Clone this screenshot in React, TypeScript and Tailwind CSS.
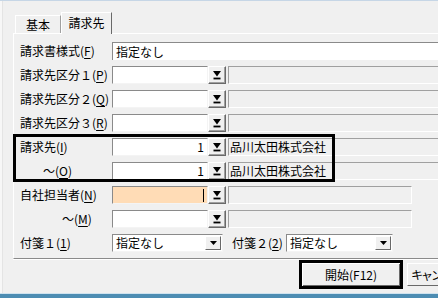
const font = { fontFamily: '"Noto Sans CJK JP", "Noto Sans", sans-serif' }

function Mn({ text, k }: { text: string; k: string }) {
  return (
    <span>
      {text}(<span className="underline underline-offset-2">{k}</span>)
    </span>
  )
}

function LookupButton() {
  return (
    <div className="flex h-[18px] w-[18px] shrink-0 items-center justify-center border-t border-l border-white border-r border-b border-r-[#696969] border-b-[#696969] bg-[#f0f0f0] shadow-[inset_-1px_-1px_0_#a0a0a0]">
      <svg width="10" height="10" viewBox="0 0 10 10">
        <path d="M1 1 H9 L5 6.5 Z" fill="#000" />
        <rect x="1.5" y="7.6" width="7" height="1.8" fill="#000" />
      </svg>
    </div>
  )
}

function TextBox({ value, bg = 'bg-white', caret = false, right = false }: { value?: string; bg?: string; caret?: boolean; right?: boolean }) {
  return (
    <div
      className={`flex h-[18px] w-[96px] shrink-0 items-center border-t border-l border-[#8a8a8a] border-r border-b border-r-[#f4f4f4] border-b-[#f4f4f4] px-[3px] ${bg} ${right ? 'justify-end' : ''}`}
    >
      <span className="leading-none">{value}</span>
      {caret && <span className="ml-auto h-[13px] w-px bg-black" />}
    </div>
  )
}

function Readonly({ text, w = 'flex-1' }: { text?: string; w?: string }) {
  return (
    <div className={`ml-[2px] flex h-[18px] items-center border-t border-l border-[#a0a0a0] border-r border-b border-r-white border-b-white bg-[#f0f0f0] pl-[1px] ${w}`}>
      <span className="leading-none">{text}</span>
    </div>
  )
}

function Row({ label, indent, children }: { label: React.ReactNode; indent?: string; children: React.ReactNode }) {
  return (
    <div className="flex h-[18px] items-center">
      <div className={`w-[92px] shrink-0 leading-none ${indent ?? ''}`}>{label}</div>
      {children}
    </div>
  )
}

function Select({ value, w }: { value: string; w: string }) {
  return (
    <div className={`flex h-[18px] shrink-0 items-center border-t border-l border-[#8a8a8a] border-r border-b border-r-[#f4f4f4] border-b-[#f4f4f4] bg-white pl-[3px] pr-[1px] ${w}`}>
      <span className="leading-none">{value}</span>
      <div className="ml-auto flex h-[14px] w-[16px] items-center justify-center border-t border-l border-white border-r border-b border-r-[#696969] border-b-[#696969] bg-[#f0f0f0]">
        <svg width="7" height="4" viewBox="0 0 7 4">
          <path d="M0 0 H7 L3.5 4 Z" fill="#000" />
        </svg>
      </div>
    </div>
  )
}

export default function App() {
  return (
    <div className="relative flex h-[298px] w-[438px] flex-col overflow-hidden bg-[#f0f0f0] text-[12px] text-black" style={font}>
      <div className="h-px bg-[#c6d6e6]" />
      <div className="absolute left-0 top-px h-[292px] w-[3px] border-r border-[#e4e4e4] bg-[#f7f7f7]" />

      {/* tabs */}
      <div className="ml-[15px] mt-[11px] flex h-[21px] items-end">
        <div className="flex h-[18px] w-[46px] items-center justify-center border-t border-l border-white border-r border-r-[#a0a0a0] leading-none">基本</div>
        <div className="relative z-10 -mb-px flex h-[22px] w-[51px] items-center justify-center border-t border-l border-white border-r border-r-[#696969] bg-[#f0f0f0] pb-[2px] leading-none">
          請求先
        </div>
      </div>

      {/* panel */}
      <div className="ml-[13px] flex h-[226px] w-[440px] flex-col gap-[6px] border-t border-l border-white border-b border-b-[#8a8a8a] pl-[6px] pt-[8px] shadow-[0_1px_0_#ffffff]">
        <Row label={<Mn text="請求書様式" k="F" />}>
          <div className="flex h-[18px] flex-1 items-center border-t border-l border-[#8a8a8a] bg-white px-[3px] leading-none">指定なし</div>
        </Row>
        <Row label={<Mn text="請求先区分１" k="P" />}>
          <TextBox />
          <LookupButton />
          <Readonly />
        </Row>
        <Row label={<Mn text="請求先区分２" k="Q" />}>
          <TextBox />
          <LookupButton />
          <Readonly />
        </Row>
        <Row label={<Mn text="請求先区分３" k="R" />}>
          <TextBox />
          <LookupButton />
          <Readonly />
        </Row>
        <Row label={<Mn text="請求先" k="I" />}>
          <TextBox value="1" right />
          <LookupButton />
          <Readonly text="品川太田株式会社" />
        </Row>
        <Row label={<Mn text="～" k="O" />} indent="pl-[23px]">
          <TextBox value="1" right />
          <LookupButton />
          <Readonly text="品川太田株式会社" />
        </Row>
        <Row label={<Mn text="自社担当者" k="N" />}>
          <TextBox bg="bg-[#ffdcb6]" caret />
          <LookupButton />
          <Readonly w="w-[184px]" />
        </Row>
        <Row label={<Mn text="～" k="M" />} indent="pl-[42px]">
          <TextBox />
          <LookupButton />
          <Readonly w="w-[184px]" />
        </Row>
        <Row label={<Mn text="付箋１" k="1" />}>
          <Select value="指定なし" w="w-[111px]" />
          <div className="ml-[9px] w-[54px] leading-none">
            <Mn text="付箋２" k="2" />
          </div>
          <Select value="指定なし" w="w-[107px]" />
        </Row>
      </div>

      {/* buttons */}
      <div className="ml-[299px] mt-px flex items-center gap-[4px]">
        <div className="flex h-[29px] w-[104px] shrink-0 items-center justify-center border-[3px] border-black bg-[#f0f0f0] leading-none shadow-[inset_1px_1px_0_#ffffff,inset_-1px_-1px_0_#696969]">
          開始(F12)
        </div>
        <div className="flex h-[23px] w-[104px] shrink-0 items-center border-t border-l border-white border-r border-b border-r-[#696969] border-b-[#696969] pl-[3px] leading-none tracking-[-2px]">
          キャンセル(Esc)
        </div>
      </div>

      <div className="absolute bottom-0 left-0 h-[5px] w-full border-t border-[#cfe3ef] bg-[#4d8db3]" />

      {/* highlight box */}
      <div className="pointer-events-none absolute left-[13px] top-[134px] h-[48px] w-[322px] border-[3px] border-black" />
    </div>
  )
}
